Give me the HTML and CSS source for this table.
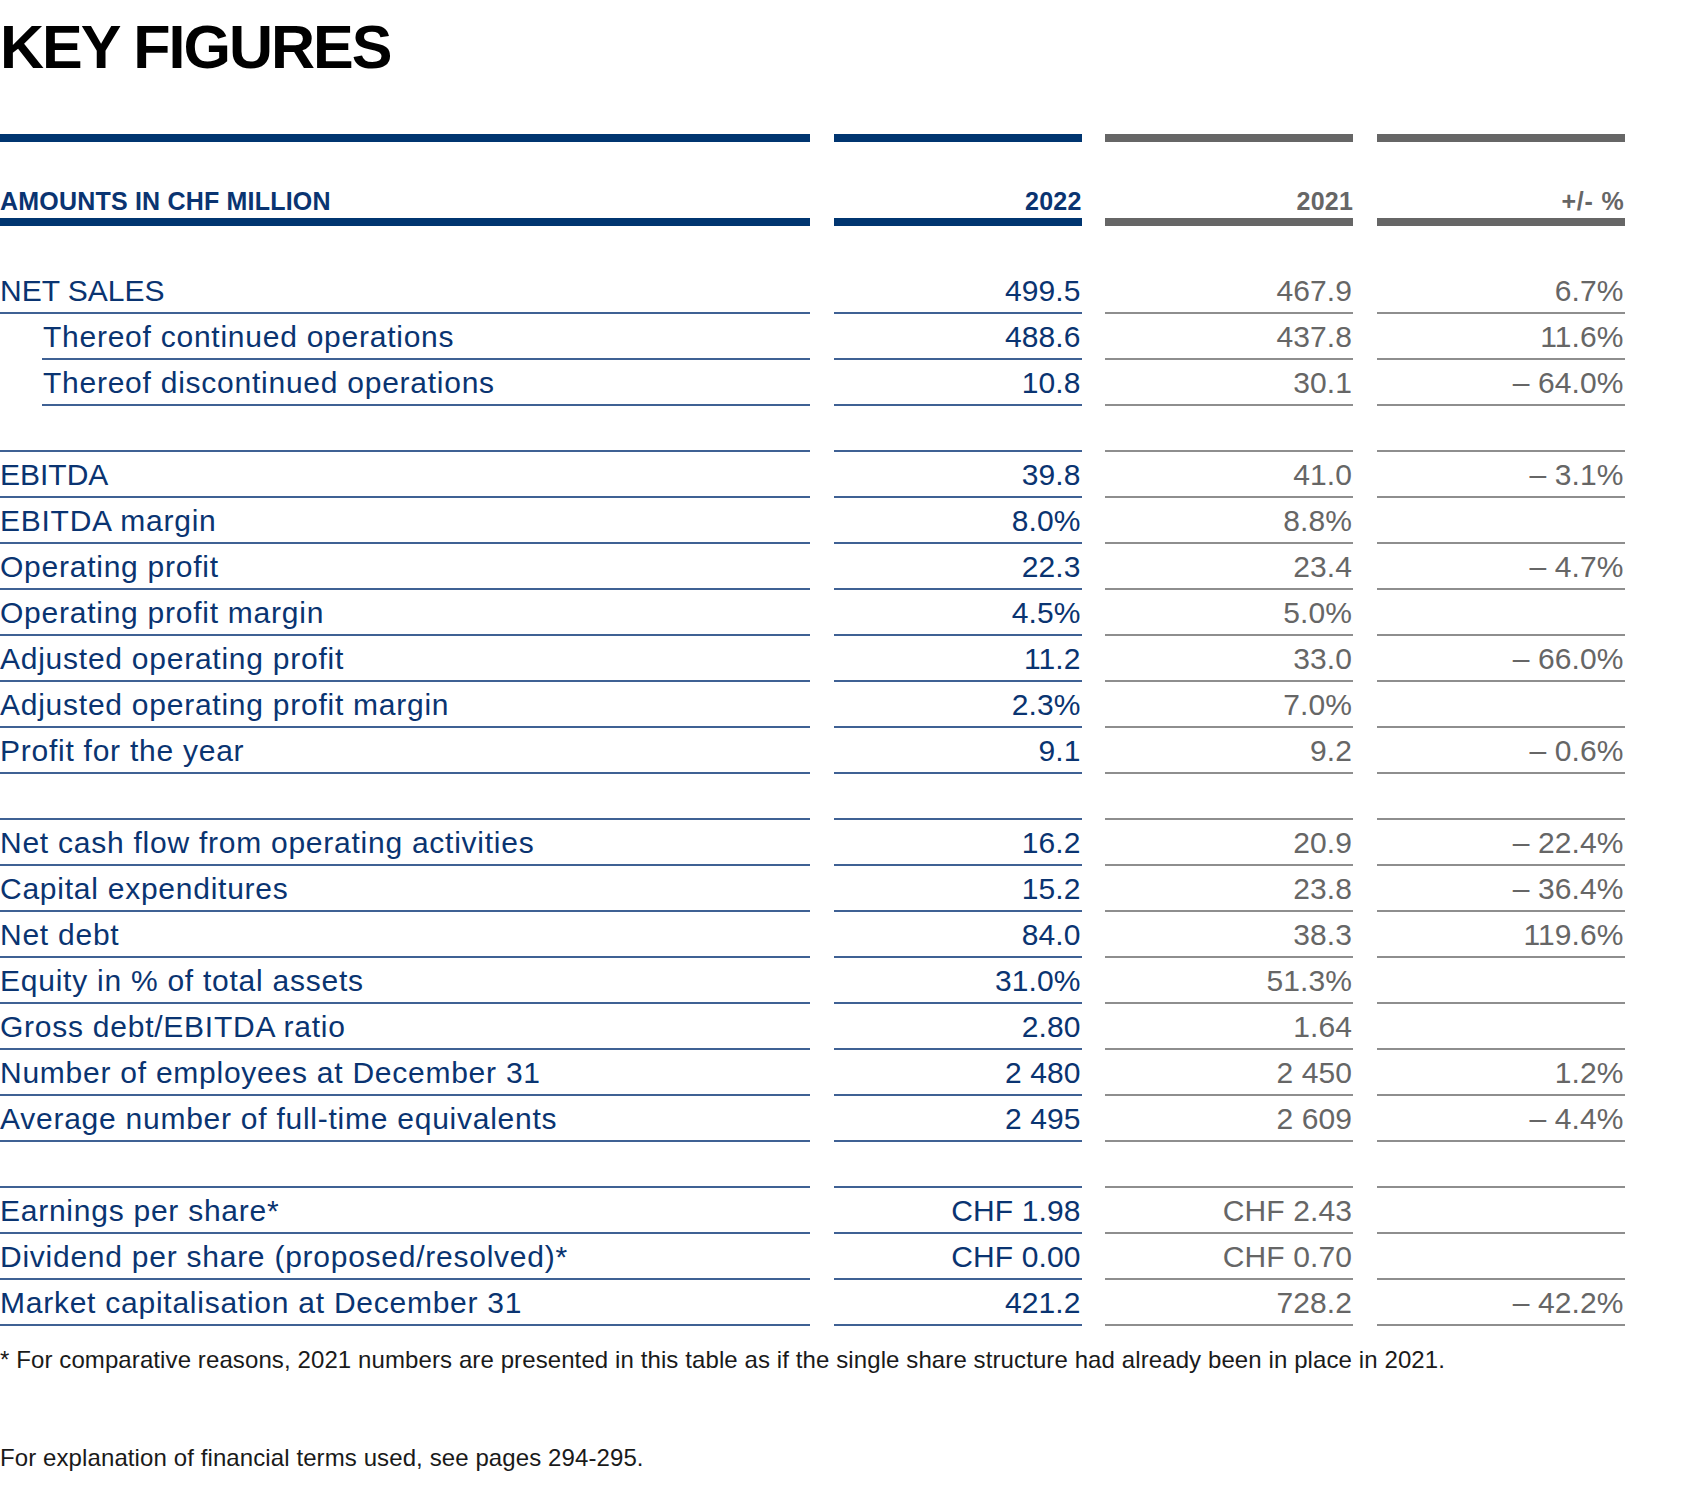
FILE: index.html
```html
<!DOCTYPE html>
<html lang="en">
<head>
<meta charset="utf-8">
<title>Key Figures</title>
<link rel="stylesheet" href="styles.css">
</head>
<body>
<h1 class="title">KEY FIGURES</h1>

<div class="table">
  <div class="row head">
    <div class="cell lab">AMOUNTS IN CHF MILLION</div>
    <div class="cell cur">2022</div>
    <div class="cell prev">2021</div>
    <div class="cell chg">+/- %</div>
  </div>

  <div class="body">
    <div class="row"><div class="cell lab caps">NET SALES</div><div class="cell cur">499.5</div><div class="cell prev">467.9</div><div class="cell chg">6.7%</div></div>
    <div class="row"><div class="cell lab sub">Thereof continued operations</div><div class="cell cur">488.6</div><div class="cell prev">437.8</div><div class="cell chg">11.6%</div></div>
    <div class="row"><div class="cell lab sub">Thereof discontinued operations</div><div class="cell cur">10.8</div><div class="cell prev">30.1</div><div class="cell chg">–&nbsp;64.0%</div></div>
    <div class="row"><div class="cell lab"></div><div class="cell cur"></div><div class="cell prev"></div><div class="cell chg"></div></div>

    <div class="row"><div class="cell lab caps">EBITDA</div><div class="cell cur">39.8</div><div class="cell prev">41.0</div><div class="cell chg">–&nbsp;3.1%</div></div>
    <div class="row"><div class="cell lab">EBITDA margin</div><div class="cell cur">8.0%</div><div class="cell prev">8.8%</div><div class="cell chg"></div></div>
    <div class="row"><div class="cell lab">Operating profit</div><div class="cell cur">22.3</div><div class="cell prev">23.4</div><div class="cell chg">–&nbsp;4.7%</div></div>
    <div class="row"><div class="cell lab">Operating profit margin</div><div class="cell cur">4.5%</div><div class="cell prev">5.0%</div><div class="cell chg"></div></div>
    <div class="row"><div class="cell lab">Adjusted operating profit</div><div class="cell cur">11.2</div><div class="cell prev">33.0</div><div class="cell chg">–&nbsp;66.0%</div></div>
    <div class="row"><div class="cell lab">Adjusted operating profit margin</div><div class="cell cur">2.3%</div><div class="cell prev">7.0%</div><div class="cell chg"></div></div>
    <div class="row"><div class="cell lab">Profit for the year</div><div class="cell cur">9.1</div><div class="cell prev">9.2</div><div class="cell chg">–&nbsp;0.6%</div></div>
    <div class="row"><div class="cell lab"></div><div class="cell cur"></div><div class="cell prev"></div><div class="cell chg"></div></div>

    <div class="row"><div class="cell lab">Net cash flow from operating activities</div><div class="cell cur">16.2</div><div class="cell prev">20.9</div><div class="cell chg">–&nbsp;22.4%</div></div>
    <div class="row"><div class="cell lab">Capital expenditures</div><div class="cell cur">15.2</div><div class="cell prev">23.8</div><div class="cell chg">–&nbsp;36.4%</div></div>
    <div class="row"><div class="cell lab">Net debt</div><div class="cell cur">84.0</div><div class="cell prev">38.3</div><div class="cell chg">119.6%</div></div>
    <div class="row"><div class="cell lab">Equity in % of total assets</div><div class="cell cur">31.0%</div><div class="cell prev">51.3%</div><div class="cell chg"></div></div>
    <div class="row"><div class="cell lab">Gross debt/EBITDA ratio</div><div class="cell cur">2.80</div><div class="cell prev">1.64</div><div class="cell chg"></div></div>
    <div class="row"><div class="cell lab">Number of employees at December 31</div><div class="cell cur">2&nbsp;480</div><div class="cell prev">2&nbsp;450</div><div class="cell chg">1.2%</div></div>
    <div class="row"><div class="cell lab">Average number of full-time equivalents</div><div class="cell cur">2&nbsp;495</div><div class="cell prev">2&nbsp;609</div><div class="cell chg">–&nbsp;4.4%</div></div>
    <div class="row"><div class="cell lab"></div><div class="cell cur"></div><div class="cell prev"></div><div class="cell chg"></div></div>

    <div class="row"><div class="cell lab">Earnings per share*</div><div class="cell cur">CHF 1.98</div><div class="cell prev">CHF 2.43</div><div class="cell chg"></div></div>
    <div class="row"><div class="cell lab">Dividend per share (proposed/resolved)*</div><div class="cell cur">CHF 0.00</div><div class="cell prev">CHF 0.70</div><div class="cell chg"></div></div>
    <div class="row"><div class="cell lab">Market capitalisation at December 31</div><div class="cell cur">421.2</div><div class="cell prev">728.2</div><div class="cell chg">–&nbsp;42.2%</div></div>
  </div>
</div>

<p class="note">* For comparative reasons, 2021 numbers are presented in this table as if the single share structure had already been in place in 2021.</p>
<p class="note terms">For explanation of financial terms used, see pages 294-295.</p>
</body>
</html>
```

FILE: styles.css
```css
html, body {
  margin: 0;
  padding: 0;
  background: #ffffff;
}

body {
  font-family: "Liberation Sans", Arial, Helvetica, sans-serif;
  color: #0a3471;
}

.title {
  margin: 17px 0 0 0;
  font-size: 61px;
  line-height: 61px;
  font-weight: 700;
  letter-spacing: -2px;
  color: #000000;
}

.table {
  margin-top: 56px;
  width: 1625px;
}

.row {
  display: grid;
  grid-template-columns: 810px 248px 248px 248px;
  column-gap: 23.5px;
}

.cell {
  box-sizing: border-box;
  height: 46px;
  padding-top: 2px;
  font-size: 30px;
  line-height: 41px;
  white-space: nowrap;
  border-bottom: 2px solid #3f6194;
}

.lab {
  letter-spacing: 0.75px;
}

.lab.caps {
  letter-spacing: 0;
}

.cur, .prev, .chg {
  text-align: right;
  padding-right: 1px;
  letter-spacing: 0.1px;
}

.lab, .cur {
  color: #0a3471;
}

.prev, .chg {
  color: #666666;
  border-bottom-color: #8e8e8e;
}

.sub {
  margin-left: 42px;
  padding-left: 1px;
}

/* header row */
.head .cell {
  height: 92px;
  padding: 0 0 4px 0;
  display: flex;
  align-items: flex-end;
  font-size: 25px;
  line-height: 25px;
  font-weight: 700;
  letter-spacing: 0.2px;
  border-top: 8px solid #003570;
  border-bottom: 8px solid #003570;
}

.head .cur, .head .prev, .head .chg {
  justify-content: flex-end;
}

.head .chg {
  letter-spacing: 0.8px;
}

.head .prev, .head .chg {
  border-color: #666666;
  color: #666666;
}

.body {
  margin-top: 42px;
}

.note {
  margin: 19px 0 0 0;
  font-size: 24px;
  line-height: 29px;
  letter-spacing: 0.1px;
  color: #1a1a1a;
}

.note.terms {
  margin-top: 69px;
}
```
